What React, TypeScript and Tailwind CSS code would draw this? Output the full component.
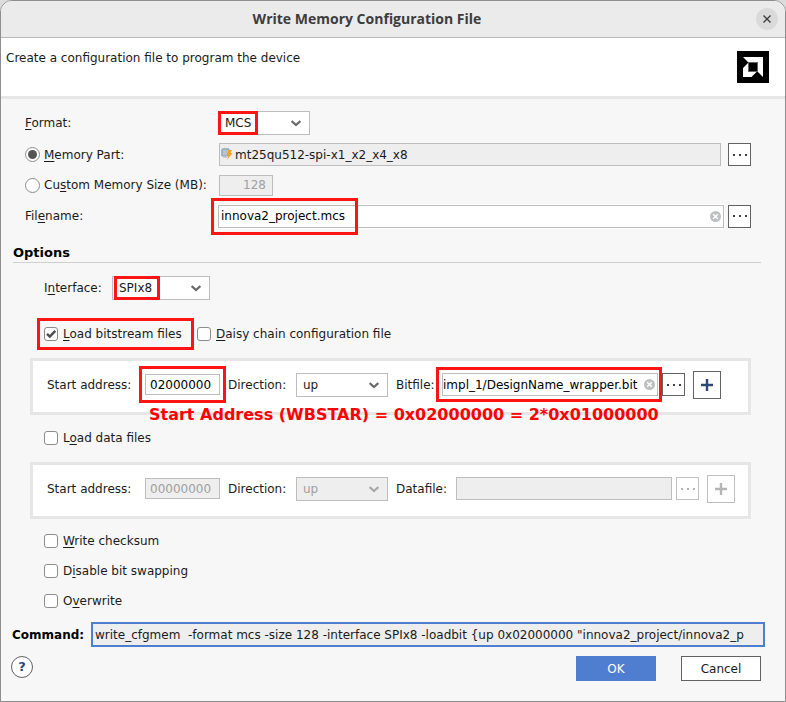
import React, { useState } from "react";

type FieldLabelProps = { text: string; hot?: number; htmlFor?: string; className?: string };

/* Label text with an underlined mnemonic letter. */
function Mnemonic({ text, hot }: { text: string; hot?: number }) {
  if (hot === undefined) return <>{text}</>;
  return (
    <>
      {text.slice(0, hot)}
      <span className="underline decoration-1 underline-offset-2">{text[hot]}</span>
      {text.slice(hot + 1)}
    </>
  );
}

function FieldLabel({ text, hot, htmlFor, className = "" }: FieldLabelProps) {
  return (
    <label htmlFor={htmlFor} className={`shrink-0 whitespace-nowrap ${className}`}>
      <Mnemonic text={text} hot={hot} />
    </label>
  );
}

/* Red annotation frame laid over its positioned parent. */
function Highlight({ className }: { className: string }) {
  return <span className={`pointer-events-none absolute border-3 border-[#fd1414] ${className}`} />;
}

function Dropdown(props: {
  id: string;
  value: string;
  className: string;
  disabled?: boolean;
  children?: React.ReactNode;
}) {
  return (
    <div className={`relative h-6 shrink-0 ${props.className}`}>
      <select
        id={props.id}
        disabled={props.disabled}
        defaultValue={props.value}
        className="h-full w-full appearance-none border border-[#bdbdbd] bg-white pl-1.5 text-[#1a1a1a] outline-none disabled:bg-[#eeeeee] disabled:text-[#a0a0a0] disabled:opacity-100"
      >
        <option>{props.value}</option>
      </select>
      <svg
        viewBox="0 0 10 7"
        className={`pointer-events-none absolute top-[9px] right-[9px] h-[7px] w-[10px] ${props.disabled ? "text-[#a8a8a8]" : "text-[#6a6a6a]"}`}
      >
        <path d="M0.6 1 L5 5 L9.4 1" fill="none" stroke="currentColor" strokeWidth="2.3" />
      </svg>
      {props.children}
    </div>
  );
}

function ClearButton({ className }: { className: string }) {
  return (
    <button type="button" aria-label="Clear" className={`absolute h-[11px] w-[11px] ${className}`}>
      <svg viewBox="0 0 11 11" className="block h-full w-full">
        <circle cx="5.5" cy="5.5" r="5.5" fill="#bfc0c1" />
        <path d="M3.2 3.2 L7.8 7.8 M7.8 3.2 L3.2 7.8" stroke="#fff" strokeWidth="1.5" />
      </svg>
    </button>
  );
}

function BrowseButton({ disabled, label }: { disabled?: boolean; label: string }) {
  return (
    <button
      type="button"
      aria-label={label}
      disabled={disabled}
      className="flex h-[23px] w-[23px] shrink-0 items-center justify-center border border-[#626262] bg-white text-[#404040] disabled:border-[#c0c0c0] disabled:text-[#b5b5b5]"
    >
      <svg viewBox="0 0 14 2" className="h-0.5 w-3.5">
        <path d="M0 0h2v2h-2z M6 0h2v2h-2z M12 0h2v2h-2z" fill="currentColor" />
      </svg>
    </button>
  );
}

function AddButton({ disabled, label }: { disabled?: boolean; label: string }) {
  return (
    <button
      type="button"
      aria-label={label}
      disabled={disabled}
      className="ml-2 flex h-7 w-7 shrink-0 items-center justify-center border border-[#626262] bg-white text-[#2c4679] disabled:border-[#c0c0c0] disabled:text-[#b5b5b5]"
    >
      <svg viewBox="0 0 12 12" className="h-3 w-3">
        <path d="M6 0v12M0 6h12" stroke="currentColor" strokeWidth="2.4" />
      </svg>
    </button>
  );
}

function Check(props: { id: string; text: string; hot: number; initial?: boolean }) {
  const [on, setOn] = useState(!!props.initial);
  return (
    <div className="flex h-5 items-center gap-[5px]">
      <span className="relative h-3.5 w-3.5 shrink-0">
        <input
          id={props.id}
          type="checkbox"
          checked={on}
          onChange={() => setOn(!on)}
          className="block h-3.5 w-3.5 appearance-none rounded-[3px] border border-[#8c8c8c] bg-white"
        />
        {on && (
          <svg viewBox="0 0 14 14" className="pointer-events-none absolute inset-0 h-3.5 w-3.5">
            <path d="M3 6.8 L5.8 9.6 L11.3 3.8" fill="none" stroke="#4c4c4c" strokeWidth="2.4" />
          </svg>
        )}
      </span>
      <FieldLabel text={props.text} hot={props.hot} htmlFor={props.id} />
    </div>
  );
}

function Radio(props: { id: string; text: string; hot: number; initial?: boolean }) {
  return (
    <div className="flex w-[194px] shrink-0 items-center gap-1">
      <input
        id={props.id}
        type="radio"
        name="memory"
        defaultChecked={props.initial}
        className="grid h-[15px] w-[15px] shrink-0 appearance-none place-content-center rounded-full border border-[#8c8c8c] bg-white before:h-[9px] before:w-[9px] before:rounded-full checked:before:bg-[#555555]"
      />
      <FieldLabel text={props.text} hot={props.hot} htmlFor={props.id} />
    </div>
  );
}

const field = "border border-[#bdbdbd] bg-white text-black outline-none";
const fieldOff = "border border-[#bdbdbd] bg-[#eeeeee] outline-none";
const panel =
  "relative mt-3.5 mr-[34px] ml-[29px] flex h-[57px] items-center border-3 border-[#e6e6e6] bg-white pb-1 pl-3.5";

export default function App() {
  return (
    <div className="bg-[#dcdcdc] font-['DejaVu_Sans',sans-serif] text-xs leading-4 text-[#1a1a1a]">
      <main className="flex min-h-screen flex-col overflow-hidden rounded-t-xl border border-[#8e8e8e] bg-[#f7f7f7]">
        <header className="relative flex h-[37px] items-center justify-center border-b border-[#b9b9b9] bg-[#ebebeb] pr-[52px]">
          <h1 className="font-['Open_Sans','Noto_Sans',sans-serif] text-sm font-bold text-[#3d3d3d]">
            Write Memory Configuration File
          </h1>
          <button
            type="button"
            aria-label="Close"
            className="absolute right-[7px] flex h-[22px] w-[22px] items-center justify-center rounded-full bg-[#dadada]"
          >
            <svg viewBox="0 0 8 8" className="h-2 w-2">
              <path d="M0.5 0.5 L7.5 7.5 M7.5 0.5 L0.5 7.5" stroke="#3d3d3d" strokeWidth="1.4" />
            </svg>
          </button>
        </header>

        <section className="flex h-[61px] justify-between border-b-3 border-[#e6e6e6] bg-white pr-4 pl-[5px]">
          <p className="pt-3">Create a configuration file to program the device</p>
          <svg viewBox="0 0 32 32" className="mt-[13px] h-8 w-8">
            <rect width="32" height="32" fill="#000" />
            <path d="M6 6h20v20l-6 -6v-8h-8z" fill="#fff" />
            <path d="M11.5 11.5v9h8.500l-5.500 5.500h-8.500v-9z" fill="#fff" />
            <rect x="11.5" y="11.5" width="9" height="9" fill="#000" stroke="#666" strokeWidth="1" />
          </svg>
        </section>

        <form className="flex flex-1 flex-col" onSubmit={(e) => e.preventDefault()}>
          <div className="flex flex-col gap-2 pt-3 pr-[34px] pl-6">
            <div className="flex items-center">
              <FieldLabel text="Format:" hot={0} htmlFor="format" className="w-[193px]" />
              <Dropdown id="format" value="MCS" className="w-[92px]">
                <Highlight className="top-0 left-0 h-6 w-10" />
              </Dropdown>
            </div>
            <div className="flex h-[23px] items-center">
              <Radio id="part" text="Memory Part:" hot={0} initial />
              <div className="relative mr-[7px] flex-1">
                <svg viewBox="0 0 12 12" className="absolute top-[5px] left-0.5 h-3 w-3">
                  <path d="M1 1h7v7h-7z" fill="#b4c4cf" stroke="#8da0ad" strokeWidth="1" />
                  <path d="M0 3h1M0 5h1M0 7h1M3 0v1M5 0v1M7 0v1M3 9v1M5 9v1" stroke="#8da0ad" strokeWidth="0.8" />
                  <path d="M7.5 2 L11 2 L9.5 5 L11.500 5 L6 12 L7.5 7.500 L5.500 7.5z" fill="#f5a11c" />
                </svg>
                <input
                  aria-label="Memory part"
                  readOnly
                  value="mt25qu512-spi-x1_x2_x4_x8"
                  className={`block h-[23px] w-full pl-[15px] ${fieldOff} text-[#1a1a1a]`}
                />
              </div>
              <BrowseButton label="Browse memory part" />
            </div>
            <div className="flex h-[22px] items-center">
              <Radio id="custom" text="Custom Memory Size (MB):" hot={2} />
              <input
                aria-label="Custom memory size"
                disabled
                value="128"
                className={`h-[21px] w-[54px] pr-1.5 text-right ${fieldOff} text-[#a0a0a0]`}
              />
            </div>
            <div className="flex h-6 items-center">
              <FieldLabel text="Filename:" hot={3} htmlFor="filename" className="w-[193px]" />
              <div className="relative mr-1 flex-1">
                <input
                  id="filename"
                  defaultValue="innova2_project.mcs"
                  className={`block h-[23px] w-full pr-5 pl-0.5 ring-1 ring-white ${field}`}
                />
                <ClearButton className="top-1.5 right-[3px]" />
                <Highlight className="-inset-y-[7px] -left-[7px] w-[147px]" />
              </div>
              <BrowseButton label="Browse filename" />
            </div>
          </div>

          <h2 className="mt-[17px] mr-6 ml-3 h-[18px] border-b border-[#cfcfcf] text-[13px] leading-4 font-bold text-black">
            Options
          </h2>

          <div className="mt-[13px] flex items-center pl-[43px]">
            <FieldLabel text="Interface:" hot={1} htmlFor="interface" className="w-[68px]" />
            <Dropdown id="interface" value="SPIx8" className="w-[98px]">
              <Highlight className="top-0 left-0.5 h-6 w-[46px]" />
            </Dropdown>
          </div>

          <div className="mt-6 flex pl-[43px]">
            <div className="relative w-[153px]">
              <Check id="bitstream" text="Load bitstream files" hot={0} initial />
              <Highlight className="-top-1.5 -left-[7px] h-8 w-[157px]" />
            </div>
            <Check id="daisy" text="Daisy chain configuration file" hot={0} />
          </div>

          <div role="group" aria-label="Bitstream" className={`${panel} pr-[27px]`}>
            <FieldLabel text="Start address:" htmlFor="addr1" className="w-[98px]" />
            <div className="relative mr-2 w-[75px] shrink-0">
              <input id="addr1" defaultValue="02000000" className={`block h-[21px] w-full pl-1 ${field}`} />
              <Highlight className="-inset-x-1.5 -inset-y-2" />
            </div>
            <FieldLabel text="Direction:" htmlFor="dir1" className="w-[68px]" />
            <Dropdown id="dir1" value="up" className="mr-2 w-[92px]" />
            <FieldLabel text="Bitfile:" htmlFor="bitfile" className="w-[46px]" />
            <div className="relative mr-1 min-w-0 flex-1">
              <input
                id="bitfile"
                defaultValue="impl_1/DesignName_wrapper.bit"
                className={`block h-[23px] w-full pr-3.5 ${field}`}
              />
              <ClearButton className="top-1.5 right-[3px]" />
              <Highlight className="-inset-y-1.5 -right-1 -left-1.5" />
            </div>
            <BrowseButton label="Browse bitfile" />
            <AddButton label="Add bitfile" />
            <p className="pointer-events-none absolute top-11 left-[116px] text-base leading-5 font-bold whitespace-nowrap text-[#ff0000]">
              Start Address (WBSTAR) = 0x02000000 = 2*0x01000000
            </p>
          </div>

          <div className="mt-[13px] pl-[43px]">
            <Check id="datafiles" text="Load data files" hot={1} />
          </div>

          <div role="group" aria-label="Data files" className={`${panel} pr-[13px]`}>
            <FieldLabel text="Start address:" htmlFor="addr2" className="w-[98px]" />
            <input
              id="addr2"
              disabled
              value="00000000"
              className={`mr-2 h-[21px] w-[75px] shrink-0 pl-1 ${fieldOff} text-[#a0a0a0]`}
            />
            <FieldLabel text="Direction:" htmlFor="dir2" className="w-[68px]" />
            <Dropdown id="dir2" value="up" disabled className="mr-2 w-[92px]" />
            <FieldLabel text="Datafile:" htmlFor="datafile" className="w-[60px]" />
            <input id="datafile" disabled value="" className={`mr-1 h-[23px] min-w-0 flex-1 ${fieldOff}`} />
            <BrowseButton label="Browse datafile" disabled />
            <AddButton label="Add datafile" disabled />
          </div>

          <div className="mt-3 flex flex-col gap-2.5 pl-[43px]">
            <Check id="checksum" text="Write checksum" hot={0} />
            <Check id="swap" text="Disable bit swapping" hot={1} />
            <Check id="overwrite" text="Overwrite" hot={1} />
          </div>

          <div className="mt-[11px] flex items-center pr-5 pl-[11px]">
            <FieldLabel text="Command:" htmlFor="command" className="w-[79px] font-bold text-black" />
            <input
              id="command"
              readOnly
              value={'write_cfgmem  -format mcs -size 128 -interface SPIx8 -loadbit {up 0x02000000 "innova2_project/innova2_p'}
              className="h-[25px] min-w-0 flex-1 border-2 border-[#4f7dd0] bg-[#eeeeee] pl-0.5 text-[#1a1a1a] outline-none"
            />
          </div>

          <div className="flex items-start pt-[9px] pr-6 pb-5 pl-2.5">
            <button
              type="button"
              aria-label="Help"
              className="mr-auto flex h-[22px] w-[22px] items-center justify-center rounded-full border border-[#626262] bg-white text-[13px] font-bold text-[#2c4679]"
            >
              ?
            </button>
            <button type="submit" className="mr-[25px] h-[25px] w-20 bg-[#4f7dd0] text-white">
              OK
            </button>
            <button type="button" className="h-[25px] w-20 border border-[#626262] bg-white">
              Cancel
            </button>
          </div>
        </form>
      </main>
    </div>
  );
}
